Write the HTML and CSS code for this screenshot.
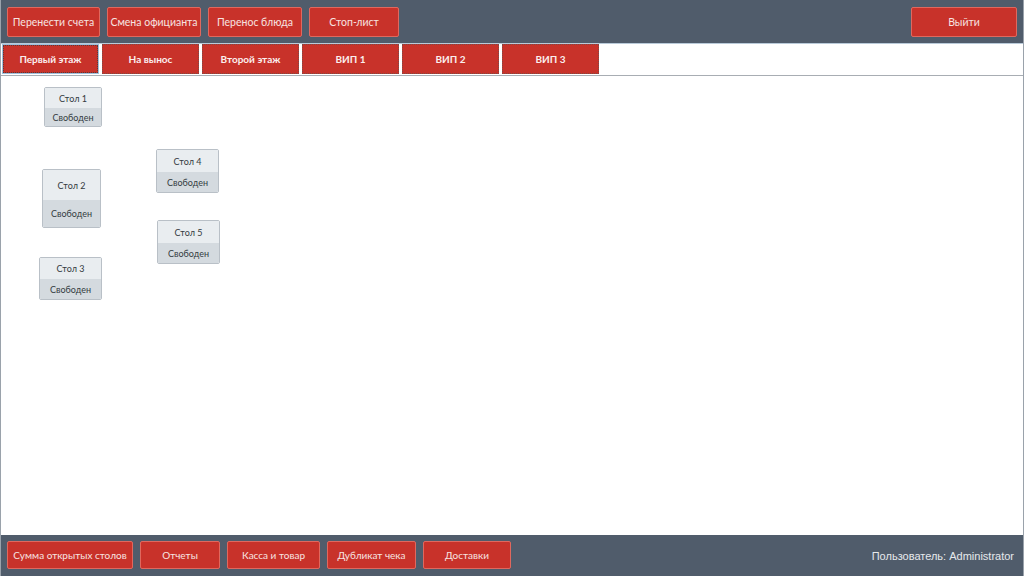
FILE: index.html
```html
<!DOCTYPE html>
<html lang="ru">
<head>
<meta charset="utf-8">
<title>Залы</title>
<link rel="stylesheet" href="styles.css">
</head>
<body>
<div class="app">
  <header class="topbar">
    <button class="btn w93">Перенести счета</button>
    <button class="btn w94">Смена официанта</button>
    <button class="btn w94">Перенос блюда</button>
    <button class="btn w90">Стоп-лист</button>
    <div class="spacer"></div>
    <button class="btn w106">Выйти</button>
  </header>
  <nav class="tabs">
    <div class="tab active">Первый этаж</div>
    <div class="tab">На вынос</div>
    <div class="tab">Второй этаж</div>
    <div class="tab">ВИП 1</div>
    <div class="tab">ВИП 2</div>
    <div class="tab">ВИП 3</div>
  </nav>
  <main class="hall">
    <div class="table" style="left:43px;top:11px;width:58px;height:40px;--split:20px"><div class="t-name">Стол 1</div><div class="t-state">Свободен</div></div>
    <div class="table" style="left:41px;top:93px;width:59px;height:59px;--split:30px"><div class="t-name">Стол 2</div><div class="t-state">Свободен</div></div>
    <div class="table" style="left:38px;top:181px;width:63px;height:43px;--split:21px"><div class="t-name">Стол 3</div><div class="t-state">Свободен</div></div>
    <div class="table" style="left:155px;top:73px;width:63px;height:44px;--split:22px"><div class="t-name">Стол 4</div><div class="t-state">Свободен</div></div>
    <div class="table" style="left:156px;top:144px;width:63px;height:44px;--split:22px"><div class="t-name">Стол 5</div><div class="t-state">Свободен</div></div>
  </main>
  <footer class="bottombar">
    <button class="btn sm w126">Сумма открытых столов</button>
    <button class="btn sm w80">Отчеты</button>
    <button class="btn sm w93">Касса и товар</button>
    <button class="btn sm w89">Дубликат чека</button>
    <button class="btn sm w88">Доставки</button>
    <div class="spacer"></div>
    <div class="user">Пользователь: Administrator</div>
  </footer>
</div>
</body>
</html>
```

FILE: styles.css
```css
* { box-sizing: border-box; }
html, body { margin: 0; padding: 0; }
body {
  width: 1024px;
  height: 576px;
  overflow: hidden;
  font-family: Lato, "Open Sans", sans-serif;
  background: #ffffff;
}
.app {
  width: 1024px;
  height: 576px;
  display: flex;
  flex-direction: column;
  border-left: 1px solid #9aa2ab;
  border-right: 1px solid #9aa2ab;
}
.topbar {
  height: 44px;
  background: #505c6b;
  display: flex;
  align-items: flex-start;
  gap: 7px;
  padding: 7px 6px 0 6px;
  border-bottom: 1px solid #b9cad9;
}
.spacer { flex: 1; }
.btn {
  height: 30px;
  background: #c8322a;
  border: 1px solid #e0685e;
  border-radius: 2px;
  color: #f7e4e1;
  font-family: Lato, "Open Sans", sans-serif;
  font-size: 10.5px;
  padding: 0;
  white-space: nowrap;
}
.btn.sm { height: 28px; font-size: 10px; }
.w93 { width: 93px; }
.w94 { width: 94px; }
.w90 { width: 90px; }
.w106 { width: 106px; }
.w126 { width: 126px; }
.w80 { width: 80px; }
.w89 { width: 89px; }
.w88 { width: 88px; }
.tabs {
  height: 32px;
  display: flex;
  gap: 3px;
  padding: 0 0 0 1px;
  align-items: flex-start;
  border-bottom: 1px solid #a8adb3;
  background: #ffffff;
}
.tab {
  width: 97px;
  height: 30px;
  background: #c8322a;
  border: 1px dotted #7a4a46;
  color: #fbeeee;
  font-size: 10px;
  font-weight: 700;
  display: flex;
  align-items: center;
  justify-content: center;
}
.tab.active {
  border: 1px solid #9fc0dc;
  outline: 1px dotted #5a3a38;
  outline-offset: -2px;
}
.hall {
  flex: 1;
  position: relative;
  background: #ffffff;
}
.table {
  position: absolute;
  display: flex;
  flex-direction: column;
  border: 1px solid #b9c0c7;
  border-radius: 2px;
  overflow: hidden;
  font-size: 9px;
  color: #333a40;
}
.t-name {
  height: var(--split);
  background: #e9edf0;
  display: flex;
  align-items: center;
  justify-content: center;
}
.t-state {
  flex: 1;
  background: #d4dadf;
  display: flex;
  align-items: center;
  justify-content: center;
}
.bottombar {
  height: 41px;
  background: #505c6b;
  display: flex;
  align-items: flex-start;
  gap: 7px;
  padding: 6px 9px 0 6px;
}
.user {
  align-self: center;
  font-family: "Liberation Sans", Arial, sans-serif;
  font-size: 11px;
  color: #e6e9ec;
  margin-top: -5px;
}
```
